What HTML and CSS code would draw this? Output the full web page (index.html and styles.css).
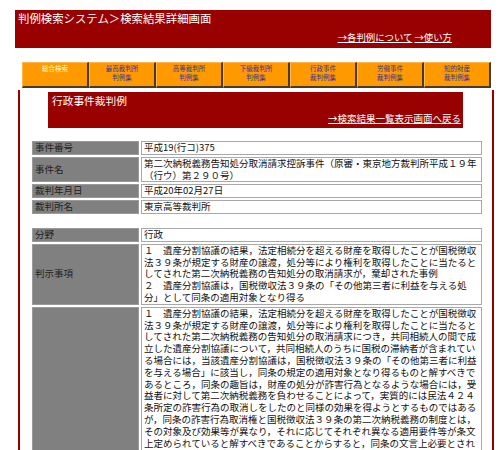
FILE: index.html
```html
<!DOCTYPE html>
<html lang="ja">
<head>
<meta charset="utf-8">
<title>判例検索システム＞検索結果詳細画面</title>
<link rel="stylesheet" href="styles.css">
</head>
<body>
<div class="header">
  <div class="site-title">判例検索システム＞検索結果詳細画面</div>
  <div class="header-links"><a href="#">→各判例について</a> <a href="#">→使い方</a></div>
</div>
<div class="tabs">
  <a class="tab tab-current" href="#">総合検索</a>
  <a class="tab" href="#">最高裁判所<br>判例集</a>
  <a class="tab" href="#">高等裁判所<br>判例集</a>
  <a class="tab" href="#">下級裁判所<br>判例集</a>
  <a class="tab" href="#">行政事件<br>裁判例集</a>
  <a class="tab" href="#">労働事件<br>裁判例集</a>
  <a class="tab" href="#">知的財産<br>裁判例集</a>
</div>
<div class="main">
  <div class="banner">
    <div class="banner-title">行政事件裁判例</div>
    <div class="banner-link"><a href="#">→検索結果一覧表示画面へ戻る</a></div>
  </div>
  <table class="detail">
    <tr><th>事件番号</th><td>平成19(行コ)375</td></tr>
    <tr><th>事件名</th><td>第二次納税義務告知処分取消請求控訴事件（原審・東京地方裁判所平成１９年<br>（行ウ）第２９０号）</td></tr>
    <tr><th>裁判年月日</th><td>平成20年02月27日</td></tr>
    <tr><th>裁判所名</th><td>東京高等裁判所</td></tr>
  </table>
  <table class="detail detail-second">
    <tr><th>分野</th><td>行政</td></tr>
    <tr><th>判示事項</th><td>１　遺産分割協議の結果，法定相続分を超える財産を取得したことが国税徴収<br>法３９条が規定する財産の譲渡，処分等により権利を取得したことに当たると<br>してされた第二次納税義務の告知処分の取消請求が，棄却された事例<br>２　遺産分割協議は，国税徴収法３９条の「その他第三者に利益を与える処<br>分」として同条の適用対象となり得る</td></tr>
    <tr class="tall"><th>裁判要旨</th><td>１　遺産分割協議の結果，法定相続分を超える財産を取得したことが国税徴収<br>法３９条が規定する財産の譲渡，処分等により権利を取得したことに当たると<br>してされた第二次納税義務の告知処分の取消請求につき，共同相続人の間で成<br>立した遺産分割協議について，共同相続人のうちに国税の滞納者が含まれてい<br>る場合には，当該遺産分割協議は，国税徴収法３９条の「その他第三者に利益<br>を与える場合」に該当し，同条の規定の適用対象となり得るものと解すべきで<br>あるところ，同条の趣旨は，財産の処分が詐害行為となるような場合には，受<br>益者に対して第二次納税義務を負わせることによって，実質的には民法４２４<br>条所定の詐害行為の取消しをしたのと同様の効果を得ようとするものではある<br>が，同条の詐害行為取消権と国税徴収法３９条の第二次納税義務の制度とは，<br>その対象及び効果等が異なり，それに応じてそれぞれ異なる適用要件等が条文<br>上定められていると解すべきであることからすると，同条の文言上必要とされ<br>ていない「詐害の意思」は要件ではないと解すべきであるとした上，国税の滞</td></tr>
  </table>
</div>
</body>
</html>
```

FILE: styles.css
```css
html, body {
  margin: 0;
  padding: 0;
  background: #ffffff;
}
body {
  font-family: "Noto Sans CJK JP", "Noto Sans", sans-serif;
  color: #111;
}
a {
  color: inherit;
}

.header {
  margin: 10px 0 0 15px;
  width: 476px;
  height: 38px;
  background: #990000;
  color: #fff;
  box-sizing: border-box;
}
.site-title {
  font-size: 11.4px;
  line-height: 15px;
  padding: 1px 0 0 3px;
}
.header-links {
  text-align: right;
  font-size: 9.4px;
  line-height: 13px;
  margin-top: 5px;
  padding-right: 39px;
}
.header-links a {
  color: #fff;
}

.tabs {
  display: flex;
  margin: 14px 0 0 22px;
}
.tab {
  display: block;
  width: 67px;
  height: 26px;
  box-sizing: border-box;
  background: #ff9900;
  border-right: 2px solid #4a3a2a;
  border-bottom: 2px solid #4a3a2a;
  border-top: 1px solid #ffb84d;
  border-left: 1px solid #ffb84d;
  text-align: center;
  font-size: 6.5px;
  line-height: 8.5px;
  padding-top: 1px;
  color: #333399;
  text-decoration: none;
}
.tab-current {
  color: #ffffcc;
}

.main {
  margin: 2px 0 0 18px;
  width: 476px;
  box-sizing: border-box;
  border-left: 2px solid #990000;
  border-right: 2px solid #990000;
  padding-top: 2px;
  padding-bottom: 40px;
}
.banner {
  margin-left: 28px;
  width: 415px;
  height: 36px;
  box-sizing: border-box;
  background: #990000;
  color: #fff;
  padding: 2px 2px 0 4px;
}
.banner-title {
  font-size: 10.7px;
  line-height: 14px;
}
.banner-link {
  text-align: right;
  font-size: 9.5px;
  line-height: 12px;
  margin-top: 4px;
}
.banner-link a {
  color: #fff;
}

.detail {
  margin: 11px 0 0 10px;
  width: 454px;
  table-layout: fixed;
  border-collapse: separate;
  border-spacing: 2px;
  font-size: 9.5px;
  line-height: 11.8px;
}
.detail-second {
  margin-top: 10px;
}
.detail th {
  width: 101px;
  background: #808080;
  border: 1px solid #9a9a9a;
  color: #222;
  font-weight: normal;
  text-align: left;
  vertical-align: middle;
  padding: 0 2px;
}
.detail td {
  background: #fff;
  border: 1px solid #a8a8a8;
  padding: 0 2px;
  vertical-align: top;
  white-space: nowrap;
  overflow: hidden;
}
.detail .tall th,
.detail .tall td {
  height: 330px;
}
```
